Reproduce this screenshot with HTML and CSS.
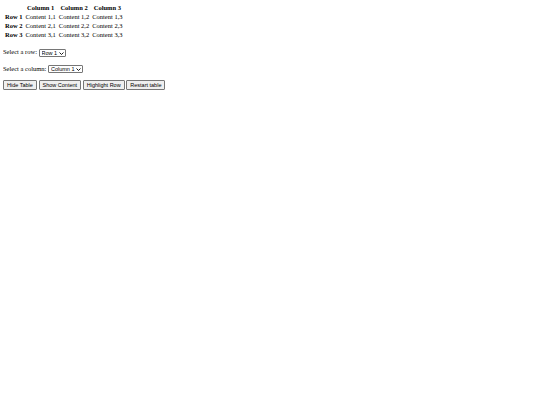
FILE: index.html
```html
<!DOCTYPE html>
<html lang="en">
<head>
    <meta charset="UTF-8">
    <title>Table Controls</title>
    <link rel="stylesheet" href="styles.css">
</head>
<body>
    <table id="myTable">
        <tr>
            <th></th>
            <th>Column 1</th>
            <th>Column 2</th>
            <th>Column 3</th>
        </tr>
        <tr>
            <th>Row 1</th>
            <td>Content 1,1</td>
            <td>Content 1,2</td>
            <td>Content 1,3</td>
        </tr>
        <tr>
            <th>Row 2</th>
            <td>Content 2,1</td>
            <td>Content 2,2</td>
            <td>Content 2,3</td>
        </tr>
        <tr>
            <th>Row 3</th>
            <td>Content 3,1</td>
            <td>Content 3,2</td>
            <td>Content 3,3</td>
        </tr>
    </table>
    <p>
        <label for="rowSelect">Select a row:</label>
        <span class="select-wrap">
            <select id="rowSelect">
                <option>Row 1</option>
                <option>Row 2</option>
                <option>Row 3</option>
            </select>
            <svg class="chevron" width="5" height="3" viewBox="0 0 5 3"><path d="M0.5 0.5 L2.5 2.5 L4.5 0.5" fill="none" stroke="#000" stroke-width="0.9"/></svg>
        </span>
    </p>
    <p>
        <label for="colSelect">Select a column:</label>
        <span class="select-wrap">
            <select id="colSelect">
                <option>Column 1</option>
                <option>Column 2</option>
                <option>Column 3</option>
            </select>
            <svg class="chevron" width="5" height="3" viewBox="0 0 5 3"><path d="M0.5 0.5 L2.5 2.5 L4.5 0.5" fill="none" stroke="#000" stroke-width="0.9"/></svg>
        </span>
    </p>
    <p>
        <button>Hide Table</button>
        <button>Show Content</button>
        <button>Highlight Row</button>
        <button>Restart table</button>
    </p>
</body>
</html>
```

FILE: styles.css
```css
body {
    margin: 3px;
    font-family: "Liberation Serif", "Times New Roman", serif;
    font-size: 6.5px;
    color: #000;
    background: #fff;
}
table {
    border-spacing: 1px;
}
th, td {
    padding: 0 1px;
    line-height: 8px;
}
p {
    margin: 7px 0;
    line-height: 9px;
}
.select-wrap {
    position: relative;
    display: inline-block;
    vertical-align: middle;
}
select {
    appearance: none;
    -webkit-appearance: none;
    display: block;
    font-family: "Liberation Sans", Arial, sans-serif;
    font-size: 5.5px;
    height: 8px;
    line-height: 6px;
    padding: 0 7px 0 2px;
    border: 1px solid #767676;
    border-radius: 1px;
    background: #fff;
    color: #000;
}
.chevron {
    position: absolute;
    right: 2px;
    top: 3px;
    pointer-events: none;
}
button {
    font-family: "Liberation Sans", Arial, sans-serif;
    font-size: 5.5px;
    line-height: 6px;
    padding: 1px 3px;
    border: 1px solid #767676;
    border-radius: 1px;
    background: #efefef;
    color: #000;
}
```
